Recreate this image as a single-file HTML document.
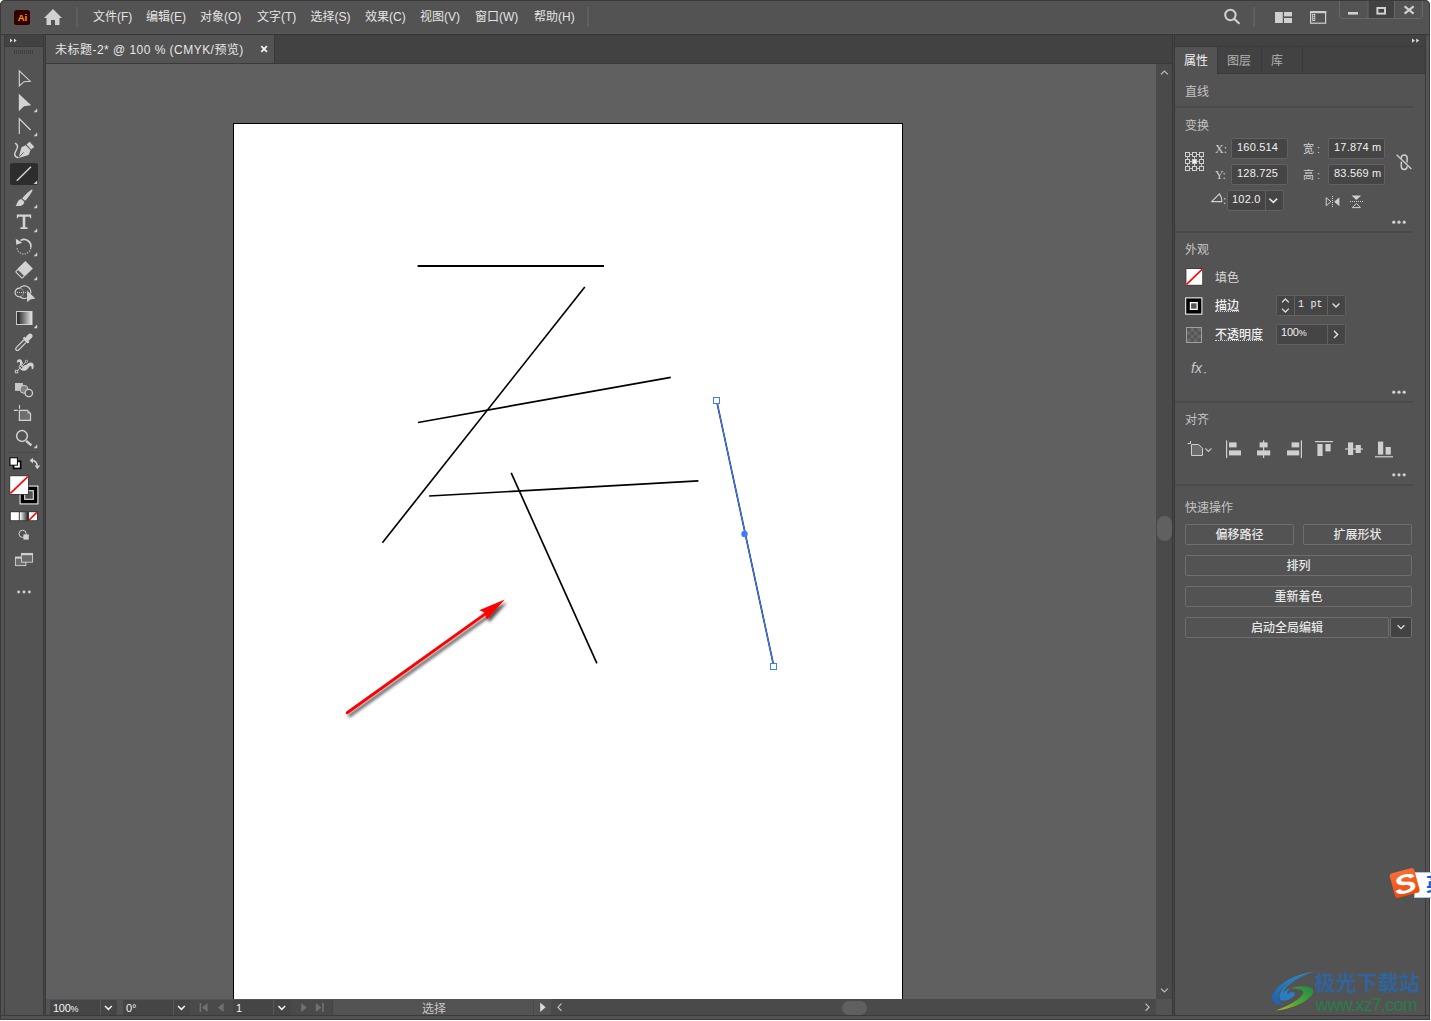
<!DOCTYPE html>
<html lang="zh-CN">
<head>
<meta charset="utf-8">
<title>未标题-2* @ 100 % (CMYK/预览)</title>
<style>
*{box-sizing:border-box;margin:0;padding:0}
html,body{width:1431px;height:1021px;overflow:hidden;background:#fff}
body{position:relative;font-family:"Liberation Sans","Noto Sans CJK SC",sans-serif;font-size:12px;color:#d6d6d6}
.abs{position:absolute}
#win{position:absolute;left:0;top:0;width:1430px;height:1020px;background:#535353;border-radius:5px 5px 0 0;overflow:hidden}
#frame{position:absolute;left:0;top:0;width:1430px;height:1020px;border:1px solid #3a3a3a;border-radius:5px 5px 0 0;pointer-events:none}
svg{position:absolute;left:0;top:0;overflow:visible}
/* menu bar */
#menubar{position:absolute;left:0;top:0;width:1431px;height:34px;background:#535353}
#menubar .mi{position:absolute;top:8px;height:18px;line-height:18px;font-size:12px;color:#e4e4e4;white-space:nowrap}
/* generic */
.dark{background:#424242}
.line{position:absolute;background:#3a3a3a}
.txt{position:absolute;white-space:nowrap;line-height:14px;height:14px}
/* toolbar */
#tools{position:absolute;left:4px;top:34px;width:42px;height:982px;background:#535353;border:1px solid #3b3b3b;border-right:3px solid #393939}
/* doc area */
#tabbar{position:absolute;left:46px;top:35px;width:1128px;height:29px;background:#424242;border-bottom:1px solid #3a3a3a}
#doctab{position:absolute;left:0;top:0;width:229px;height:28px;background:#535353;border-right:1px solid #3a3a3a}
#canvas{position:absolute;left:46px;top:64px;width:1110px;height:935px;background:#606060;overflow:hidden}
#artboard{position:absolute;left:187px;top:59px;width:670px;height:880px;background:#fff;border:1px solid #000}
#vscroll{position:absolute;left:1156px;top:64px;width:16px;height:935px;background:#4a4a4a}
#status{position:absolute;left:46px;top:999px;width:1126px;height:17px;background:#535353}
/* right panel */
#rpanel{position:absolute;left:1175px;top:35px;width:251px;height:981px;background:#535353;border-right:1px solid #3a3a3a;border-bottom:1px solid #3a3a3a}
.sep{position:absolute;left:0;width:238px;height:2px;background:#4a4a4a}
.inp{position:absolute;background:#454545;border:1px solid #616161;border-radius:2px;color:#f0f0f0;font-size:11px;letter-spacing:0.2px;line-height:14px;white-space:nowrap;overflow:hidden}
.btn{position:absolute;height:21px;border:1px solid #6e6e6e;border-radius:2px;text-align:center;line-height:20px;font-size:12px;font-weight:500;color:#e6e6e6;background:#535353}
.ser{font-family:"Liberation Serif","Noto Serif CJK SC",serif;font-size:12px}
.ul{border-bottom:1px dotted #cfcfcf;height:13px;line-height:12px}
.lbl{position:absolute;white-space:nowrap;font-size:12px;line-height:14px;color:#cfcfcf}
</style>
</head>
<body>
<div id="win">

<!-- MENU BAR -->
<div id="menubar">
  <div class="abs" style="left:14px;top:10px;width:16px;height:15px;background:#330000;border-radius:2.5px;color:#ff9a00;font-size:9.5px;font-weight:bold;line-height:15px;text-align:center;letter-spacing:0;padding-left:1px">Ai</div>
  <svg class="abs" style="left:43px;top:8px" width="20" height="18" viewBox="0 0 20 18"><path d="M10 1 L19 10 L16.5 10 L16.5 17 L12 17 L12 12 L8 12 L8 17 L3.5 17 L3.5 10 L1 10 Z" fill="#d0d0d0"/></svg>
  <div class="line" style="left:76px;top:7px;width:2px;height:20px;background:#5e5e5e"></div>
  <div class="mi" style="left:93px">文件(F)</div>
  <div class="mi" style="left:146px">编辑(E)</div>
  <div class="mi" style="left:200px">对象(O)</div>
  <div class="mi" style="left:257px">文字(T)</div>
  <div class="mi" style="left:310.5px">选择(S)</div>
  <div class="mi" style="left:365px">效果(C)</div>
  <div class="mi" style="left:420px">视图(V)</div>
  <div class="mi" style="left:475px">窗口(W)</div>
  <div class="mi" style="left:534px">帮助(H)</div>
  <div class="line" style="left:587px;top:7px;width:2px;height:20px;background:#5e5e5e"></div>
</div>
<div class="line" style="left:0;top:33px;width:1431px;height:1px;background:#575757"></div><div class="line" style="left:0;top:34px;width:1431px;height:1px;background:#363636"></div>

<!-- TOOLBAR -->
<div id="tools">
  <div class="abs dark" style="left:0;top:0;width:38px;height:12px;border-bottom:1px solid #3b3b3b"></div>
</div>


<!-- TOOL ICONS (page coordinates) -->
<svg id="toolicons" width="46" height="1021" viewBox="0 0 46 1021">
 <defs>
  <linearGradient id="gbw" x1="0" x2="1" y1="0" y2="0"><stop offset="0" stop-color="#1a1a1a"/><stop offset="1" stop-color="#e8e8e8"/></linearGradient>
  <linearGradient id="gwb" x1="0" x2="1" y1="0" y2="0"><stop offset="0" stop-color="#fff"/><stop offset="1" stop-color="#222"/></linearGradient>
 </defs>
 <g fill="#d2d2d2" stroke="none">
  <!-- header chevrons -->
  <path d="M10 38.5 L12.6 40.5 L10 42.5 Z M14 38.5 L16.6 40.5 L14 42.5 Z" fill="#d8d8d8"/>
  <!-- grip -->
  <g fill="#3e3e3e"><rect x="14" y="50" width="1" height="4"/><rect x="16" y="50" width="1" height="4"/><rect x="18" y="50" width="1" height="4"/><rect x="20" y="50" width="1" height="4"/><rect x="22" y="50" width="1" height="4"/><rect x="24" y="50" width="1" height="4"/><rect x="26" y="50" width="1" height="4"/><rect x="28" y="50" width="1" height="4"/><rect x="30" y="50" width="1" height="4"/><rect x="32" y="50" width="1" height="4"/></g>
  <!-- selection tool -->
  <path d="M19.3 70.8 L19.3 86 L24 81.7 L30.2 81.2 Z" fill="none" stroke="#d2d2d2" stroke-width="1.15" stroke-linejoin="miter"/>
  <!-- direct selection -->
  <path d="M18.8 93.8 L18.8 111.3 L24 106.3 L31.2 105.3 Z"/>
  <path d="M37.2 108.6 V112.2 H33.6 Z"/>
  <!-- anchor tool -->
  <path d="M19.3 134 L19.3 118.8 L30.6 130" fill="none" stroke="#d2d2d2" stroke-width="1.2"/>
  <path d="M37.2 132.6 V136.2 H33.6 Z"/>
  <!-- curvature pen -->
  <path d="M15.4 143.4 C17.2 144.4 18 145.6 17.4 147.6 C16.6 150.2 14.4 152.6 14.7 154.6 C14.9 156.4 16.2 157.2 17.8 157.5" fill="none" stroke="#d2d2d2" stroke-width="1.4" stroke-linecap="round"/>
  <path d="M18.5 157.9 L21.2 148 Q21.5 147.2 22.4 146.8 L25.8 145.3 L30.5 150 L29 154.2 Q28.6 155 27.8 155.3 Z"/>
  <path d="M26.6 144.6 L29.1 142.1 Q29.5 141.8 29.9 142.2 L33.8 146.3 Q34.1 146.8 33.7 147.2 L31.3 149.4 Z"/>
  <path d="M18.9 157.2 L23.6 152.4" stroke="#535353" stroke-width="0.9" fill="none"/>
  <!-- line tool (selected) -->
  <rect x="10" y="163" width="28" height="22" rx="2.5" fill="#2d2d2d"/>
  <path d="M16.8 180.8 L31 166.8" stroke="#d2d2d2" stroke-width="1.5" fill="none"/>
  <path d="M37.2 180.4 V184 H33.6 Z"/>
  <!-- brush -->
  <path d="M31.9 189.5 C30 190.2 25.2 194.8 22.1 198.4 L25.3 200.8 C28.4 197.2 31.6 192.6 32.4 190.4 C32.6 189.8 32.4 189.4 31.9 189.5 Z"/>
  <path d="M21.4 199 C19 199.4 18 201 17.4 202.6 C16.8 204.2 16.2 205.2 15.5 205.8 C19 206.3 22.2 206.4 23.7 203.8 C24.3 202.8 24.3 202 24 201.5 Z"/>
  <path d="M37.2 204.6 V208.2 H33.6 Z"/>
  <!-- type -->
  <path d="M16.8 214.4 H31.2 V218.2 H29.9 V216.8 H25.3 V227.2 H27.6 V228.9 H20.4 V227.2 H22.7 V216.8 H18.1 V218.2 H16.8 Z"/>
  <path d="M37.2 228.6 V232.2 H33.6 Z"/>
  <!-- rotate -->
  <path d="M20.6 240.4 A6.9 6.9 0 0 1 30.8 247.6" fill="none" stroke="#d2d2d2" stroke-width="1.7"/>
  <path d="M30.7 248.2 A6.9 6.9 0 0 1 17 247.6" fill="none" stroke="#d2d2d2" stroke-width="1.3" stroke-dasharray="1 1.55"/>
  <path d="M15.8 238.7 L16.2 244.7 L22.2 242.7 Z"/>
  <path d="M37.2 252.6 V256.2 H33.6 Z"/>
  <!-- eraser -->
  <g transform="translate(25.4 260.9) rotate(45)">
   <rect x="0" y="0" width="10.6" height="10.9"/>
   <rect x="0.7" y="11" width="9.2" height="3.6" rx="0.9" fill="none" stroke="#d2d2d2" stroke-width="1.2"/>
  </g>
  <path d="M37.2 276.6 V280.2 H33.6 Z"/>
  <!-- shape builder -->
  <path d="M19.63 288.21 A4.3 4.3 0 0 1 20.13 296.73" fill="none" stroke="#8c8c8c" stroke-width="1"/>
  <path d="M19.63 288.21 A4.3 4.3 0 1 0 20.13 296.73 A6.3 6.3 0 1 0 19.63 288.21 Z" fill="none" stroke="#d2d2d2" stroke-width="1.2"/>
  <path d="M17 292.5 H26.4" stroke="#e6e6e6" stroke-width="0.9" stroke-dasharray="0.9 1.15" fill="none"/>
  <path d="M27.1 290.6 L27.1 302.3 L30.2 299.5 L35.3 298.6 Z" stroke="#535353" stroke-width="0.9" paint-order="stroke"/>
  <!-- gradient -->
  <rect x="16.6" y="311.5" width="15.4" height="13" fill="url(#gbw)" stroke="#d2d2d2" stroke-width="1"/>
  <path d="M37.2 324.6 V328.2 H33.6 Z"/>
  <!-- eyedropper -->
  <g transform="translate(16.2 350) rotate(-45)">
   <rect x="0" y="-1.7" width="13.4" height="3.4" rx="1.7" fill="none" stroke="#d2d2d2" stroke-width="1.2"/>
   <rect x="12.8" y="-3.7" width="2.4" height="7.4" rx="0.6"/>
   <rect x="14.4" y="-2.5" width="7.8" height="5" rx="2.5"/>
  </g>
  <!-- symbol sprayer -->
  <path d="M16.9 362.4 C16.6 360.4 18 359.2 19.6 359.3 C21.4 359.4 22.2 361 22.6 362.6 C23 364.2 23.6 365.4 25 365.2 C26.8 365 28.2 362.8 30.4 362.6 C32.6 362.4 33.8 364 33.7 366 C33.6 367.4 33.4 368.4 33 369.2 L31.6 368.8 C31.8 367.6 31.6 366.2 30.6 366 C29.6 365.8 29 367.2 28 368.4 C26.8 369.8 25.2 371 23.2 370.8 C20.6 370.6 19.6 368.6 19.6 366.6 C19.6 364.8 20.4 363.4 19.8 362.2 C19.4 361.4 18.4 361.4 18.2 362.6 Z"/>
  <path d="M17.8 370.4 L25.6 362.2" stroke="#535353" stroke-width="2.2" fill="none"/>
  <path d="M17.6 370.6 L25.7 362.1" stroke="#d2d2d2" stroke-width="0.9" fill="none"/>
  <rect x="15.3" y="370.3" width="2.5" height="2.5" fill="#535353" stroke="#d2d2d2" stroke-width="0.9"/>
  <circle cx="26.4" cy="361.4" r="1.15" fill="#535353" stroke="#d2d2d2" stroke-width="0.8"/>
  <circle cx="21" cy="367" r="1.9" fill="#535353" stroke="#d2d2d2" stroke-width="0.9"/>
  <path d="M19.8 368.2 L22.2 365.8" stroke="#d2d2d2" stroke-width="0.8" fill="none"/>
  <!-- live paint / shapes -->
  <rect x="15.1" y="383.1" width="7.9" height="7.5" fill="#c8c8c8"/>
  <circle cx="24" cy="389.3" r="4" fill="#808080" stroke="#d2d2d2" stroke-width="0.9"/>
  <rect x="15.1" y="383.1" width="5.4" height="7.5" fill="#c8c8c8"/>
  <circle cx="28.8" cy="393" r="3.7" fill="#535353" stroke="#d2d2d2" stroke-width="1.3"/>
  <!-- artboard -->
  <path d="M19.5 404.9 V408.8 M13.9 410.4 H17.8" stroke="#d2d2d2" stroke-width="1.1" fill="none"/>
  <path d="M19.4 410.4 H27.4 L30.5 413.6 V420.4 H19.4 Z" fill="#6e6e6e" stroke="#d2d2d2" stroke-width="1.2"/>
  <path d="M27.4 410.4 V413.6 H30.5 Z" fill="#bdbdbd"/>
  <!-- zoom -->
  <circle cx="22" cy="436" r="5.4" fill="none" stroke="#d2d2d2" stroke-width="1.5"/>
  <path d="M26.2 440.8 L31.4 445.4" stroke="#d2d2d2" stroke-width="2.4" fill="none"/>
  <path d="M37.2 444.6 V448.2 H33.6 Z"/>
  <!-- separator -->
  <rect x="9" y="452" width="30" height="1" fill="#484848"/>
  <!-- default fill/stroke -->
  <rect x="13.6" y="461.4" width="7" height="7" fill="#fff" stroke="#000" stroke-width="1.6"/>
  <rect x="10" y="457.8" width="7.4" height="7.4" fill="#fff" stroke="#000" stroke-width="1"/>
  <!-- swap -->
  <path d="M31 460.4 C34.6 460 37 462.4 37.2 466" fill="none" stroke="#d2d2d2" stroke-width="1.6"/>
  <path d="M29.6 460.6 L33 457.8 L33 463.4 Z"/>
  <path d="M34.6 465.4 L40.2 465.4 L37.4 469.2 Z"/>
  <!-- stroke swatch -->
  <rect x="19.6" y="485.6" width="18.8" height="18.8" fill="#fff"/>
  <rect x="20.6" y="486.6" width="16.8" height="16.8" fill="#000"/>
  <rect x="24.2" y="490.2" width="9.6" height="9.6" fill="#fff"/>
  <rect x="25.2" y="491.2" width="7.6" height="7.6" fill="#535353"/>
  <!-- fill swatch -->
  <rect x="9.4" y="475.4" width="19.4" height="19.4" fill="#3a3a3a"/>
  <rect x="10.2" y="476.2" width="17.8" height="17.8" fill="#fff"/>
  <path d="M10.4 493.4 L27.8 476.6" stroke="#f00" stroke-width="1.6"/>
  <!-- colour/gradient/none -->
  <rect x="9.8" y="511.2" width="28" height="10" fill="#3a3a3a"/>
  <rect x="10.8" y="512.2" width="8" height="8" fill="#fff"/>
  <rect x="19.8" y="512.2" width="8.4" height="8" fill="url(#gwb)"/>
  <rect x="29" y="512.2" width="8" height="8" fill="#fff"/>
  <path d="M29.2 520 L36.8 512.4" stroke="#f00" stroke-width="1.6"/>
  <!-- draw mode -->
  <circle cx="22.6" cy="533.8" r="3.6" fill="none" stroke="#d2d2d2" stroke-width="1"/>
  <rect x="23.4" y="534.4" width="5.4" height="5.2" fill="#d2d2d2"/>
  <!-- screen mode -->
  <rect x="15.4" y="557" width="10.4" height="8.6" fill="#6a6a6a" stroke="#d2d2d2" stroke-width="0.9"/>
  <rect x="15.4" y="557" width="10.4" height="1.6" fill="#d2d2d2"/>
  <rect x="21.4" y="553.4" width="11.2" height="8.8" fill="#6a6a6a" stroke="#d2d2d2" stroke-width="0.9"/>
  <rect x="21.4" y="553.4" width="11.2" height="1.8" fill="#d2d2d2"/>
  <!-- more -->
  <circle cx="18.6" cy="592" r="1.4"/><circle cx="24" cy="592" r="1.4"/><circle cx="29.4" cy="592" r="1.4"/>
 </g>
</svg>

<div class="line" style="left:44px;top:35px;width:1px;height:981px;background:#464646"></div>
<!-- DOC TAB BAR -->
<div id="tabbar">
  <div id="doctab">
    <div class="txt" style="left:9px;top:8px;font-size:12px;letter-spacing:0.47px;color:#e6e6e6">未标题-2* @ 100 % (CMYK/预览)</div>
    
  </div>
</div>

<!-- CANVAS -->
<div id="canvas">
  <div id="artboard"></div>
</div>
<div id="vscroll"></div>

<!-- ARTWORK (page coordinates) -->
<svg id="art" width="1160" height="1000" viewBox="0 0 1160 1000">
 <defs>
  <filter id="sh" x="-10%" y="-20%" width="130%" height="150%"><feDropShadow dx="2.4" dy="2.9" stdDeviation="1.8" flood-color="#000" flood-opacity="0.68"/></filter>
 </defs>
 <g stroke="#000" stroke-width="1.65" fill="none" stroke-linecap="butt">
  <path d="M417.6 266 H604" stroke-width="2"/>
  <path d="M584.8 287 L382.4 542.7"/>
  <path d="M418 422.5 L670.8 377.4"/>
  <path d="M429.1 496 L698.4 480.9"/>
  <path d="M511.2 472.9 L596.9 663.4"/>
 </g>
 <!-- selected line -->
 <path d="M716.6 400.6 L773.8 666.4" stroke="#101840" stroke-width="1.6" fill="none"/>
 <path d="M716.6 400.6 L773.8 666.4" stroke="#3f7bff" stroke-width="1.1" fill="none"/>
 <rect x="713.5" y="397.5" width="6" height="6" fill="#fff" stroke="#3f7bff" stroke-width="1"/>
 <rect x="770.5" y="663.5" width="6" height="6" fill="#fff" stroke="#3f7bff" stroke-width="1"/>
 <circle cx="744.5" cy="533.9" r="3.2" fill="#3f7bff"/>
 <!-- red arrow -->
 <g filter="url(#sh)">
  <path d="M347.2 712.8 L486 613.4" stroke="#ff0000" stroke-width="2.9" fill="none" stroke-linecap="round"/>
  <path d="M504.8 599.4 L479.2 610.2 L484.4 612.2 L485.8 615.4 L486.6 619.8 Z" fill="#ff0000"/>
 </g>
</svg>

<div class="line" style="left:1172px;top:35px;width:3px;height:981px;background:#383838"></div><div class="line" style="left:1173px;top:35px;width:1px;height:981px;background:#464646"></div>

<!-- STATUS BAR -->
<div id="status">
  <div class="abs" style="left:4px;top:1px;width:67px;height:16px;background:#454545"></div>
  <div class="abs" style="left:54px;top:1px;width:1px;height:16px;background:#575757"></div>
  <div class="txt" style="left:7px;top:2px;font-size:11px;letter-spacing:-0.3px;color:#f4f4f4">100<span style="font-size:9px;letter-spacing:-0.5px">%</span></div>
  <div class="abs" style="left:77px;top:1px;width:67px;height:16px;background:#454545"></div>
  <div class="abs" style="left:127px;top:1px;width:1px;height:16px;background:#575757"></div>
  <div class="txt" style="left:80px;top:2px;font-size:11px;color:#f4f4f4">0°</div>
  <div class="abs" style="left:144px;top:1px;width:142px;height:16px;background:#4a4a4a"></div>
  <div class="abs" style="left:187px;top:1px;width:58px;height:16px;background:#454545"></div>
  <div class="abs" style="left:227px;top:1px;width:1px;height:16px;background:#575757"></div>
  <div class="txt" style="left:190px;top:2px;font-size:11px;color:#f4f4f4">1</div>
  <div class="abs" style="left:286px;top:1px;width:1px;height:16px;background:#444"></div>
  <div class="txt" style="left:376px;top:3px;font-size:12px;color:#c6c6c6">选择</div>
  <div class="abs" style="left:487px;top:1px;width:1px;height:16px;background:#484848"></div>
  <div class="abs" style="left:505px;top:0px;width:605px;height:17px;background:#4a4a4a"></div>
  <div class="abs" style="left:796px;top:2px;width:25px;height:14px;border-radius:7px;background:#606060"></div>
</div>
<div class="abs" style="left:1157px;top:516px;width:15px;height:25px;border-radius:7.5px;background:#606060"></div>
<svg id="sbicons" width="1431" height="1021" viewBox="0 0 1431 1021">
  <g fill="none" stroke="#f0f0f0" stroke-width="1.5">
   <path d="M105 1006 L108.4 1009.4 L111.8 1006"/>
   <path d="M178 1006 L181.4 1009.4 L184.8 1006"/>
   <path d="M278.4 1006 L281.8 1009.4 L285.2 1006"/>
  </g>
  <g fill="#707070">
   <rect x="199.6" y="1003" width="1.6" height="9"/><path d="M207.6 1003 V1012 L202 1007.5 Z"/>
   <path d="M223.6 1003 V1012 L218 1007.5 Z"/>
   <path d="M301.2 1003 V1012 L306.8 1007.5 Z"/>
   <path d="M315.8 1003 V1012 L321.4 1007.5 Z"/><rect x="322.2" y="1003" width="1.6" height="9"/>
  </g>
  <path d="M540.2 1002.6 V1012 L545.6 1007.3 Z" fill="#dcdcdc"/>
  <path d="M561.4 1003.6 L558 1007.2 L561.4 1010.8" fill="none" stroke="#c4c4c4" stroke-width="1.2"/>
  <path d="M1145.6 1003.6 L1149 1007.2 L1145.6 1010.8" fill="none" stroke="#c4c4c4" stroke-width="1.2"/>
</svg>

<!-- RIGHT PANEL -->
<div id="rpanel">
  <div class="abs dark" style="left:0;top:0;width:250px;height:12px;border-bottom:1px solid #3a3a3a"></div>
  <div class="abs dark" style="left:0;top:12px;width:250px;height:27px;border-bottom:1px solid #3a3a3a"></div>
  <div class="abs" style="left:0;top:12px;width:43px;height:27px;background:#535353;border-right:1px solid #3a3a3a"></div>
  <div class="line" style="left:86px;top:12px;width:1px;height:26px"></div>
  <div class="line" style="left:127px;top:12px;width:1px;height:26px"></div>
  <div class="txt" style="left:9px;top:19px;color:#f4f4f4">属性</div>
  <div class="txt" style="left:52px;top:19px;color:#b2b2b2">图层</div>
  <div class="txt" style="left:96px;top:19px;color:#b2b2b2">库</div>

  <div class="lbl" style="left:10px;top:50px;color:#c4c4c4">直线</div>
  <div class="sep" style="top:71px"></div>
  <div class="lbl" style="left:10px;top:84px;color:#c4c4c4">变换</div>

  <div class="lbl ser" style="left:40px;top:107px">X:</div>
  <div class="inp" style="left:56px;top:103px;width:57px;height:21px;padding:0.5px 0 0 5px">160.514</div>
  <div class="lbl ser" style="left:40px;top:133px">Y:</div>
  <div class="inp" style="left:56px;top:129px;width:57px;height:21px;padding:0.5px 0 0 5px">128.725</div>
  <div class="lbl" style="left:128px;top:107px;font-size:11px">宽 :</div>
  <div class="inp" style="left:153px;top:103px;width:57px;height:21px;padding:0.5px 0 0 5px">17.874 m</div>
  <div class="lbl" style="left:128px;top:133px;font-size:11px">高 :</div>
  <div class="inp" style="left:153px;top:129px;width:57px;height:21px;padding:0.5px 0 0 5px">83.569 m</div>
  <div class="lbl ser" style="left:48px;top:158px">:</div>
  <div class="inp" style="left:52px;top:155px;width:57px;height:21px;padding:1px 0 0 4px">102.0</div>
  <div class="line" style="left:90px;top:156px;width:1px;height:19px;background:#616161"></div>
  <div class="sep" style="top:196px"></div>

  <div class="lbl" style="left:10px;top:208px;color:#c4c4c4">外观</div>
  <div class="lbl" style="left:40px;top:236px;color:#d8d8d8">填色</div>
  <div class="lbl ul" style="left:40px;top:264px;color:#f0f0f0;font-weight:500">描边</div>
  <div class="inp" style="left:101px;top:260px;width:70px;height:21px;padding:2px 0 0 21px;font-family:'Liberation Mono',monospace;font-size:10px">1 pt</div>
  <div class="line" style="left:119px;top:261px;width:1px;height:19px;background:#616161"></div>
  <div class="line" style="left:152px;top:261px;width:1px;height:19px;background:#616161"></div>
  <div class="lbl ul" style="left:40px;top:293px;color:#f0f0f0;font-weight:500">不透明度</div>
  <div class="inp" style="left:101px;top:289px;width:70px;height:21px;padding:0 0 0 4px;letter-spacing:-0.2px">100<span style="font-size:9px">%</span></div>
  <div class="line" style="left:152px;top:290px;width:1px;height:19px;background:#616161"></div>
  <div class="sep" style="top:366px"></div>

  <div class="lbl" style="left:10px;top:378px;color:#c4c4c4">对齐</div>
  <div class="sep" style="top:449px"></div>

  <div class="lbl" style="left:10px;top:466px;color:#c4c4c4">快速操作</div>
  <div class="btn" style="left:10px;top:489px;width:109px">偏移路径</div>
  <div class="btn" style="left:128px;top:489px;width:109px">扩展形状</div>
  <div class="btn" style="left:10px;top:520px;width:227px">排列</div>
  <div class="btn" style="left:10px;top:551px;width:227px">重新着色</div>
  <div class="btn" style="left:10px;top:582px;width:204px">启动全局编辑</div>
  <div class="btn" style="left:215px;top:582px;width:22px;background:#424242"></div>
</div>


<!-- RIGHT PANEL + TOP RIGHT ICONS (page coordinates) -->
<svg id="picons" width="1431" height="1021" viewBox="0 0 1431 1021">
 <g fill="#d0d0d0">
  <!-- search -->
  <circle cx="1230.4" cy="15" r="5.2" fill="none" stroke="#d0d0d0" stroke-width="2"/>
  <path d="M1234.2 18.8 L1239.4 23.8" stroke="#d0d0d0" stroke-width="2.1" fill="none"/>
  <rect x="1253" y="7" width="2" height="20" fill="#5e5e5e"/>
  <!-- arrange docs -->
  <rect x="1275" y="12" width="7.8" height="11"/><rect x="1284" y="12" width="8" height="4.4"/><rect x="1284" y="18" width="8" height="5"/>
  <!-- workspace -->
  <rect x="1310.6" y="11.6" width="15" height="11.6" fill="none" stroke="#d0d0d0" stroke-width="1.2"/>
  <rect x="1310" y="11" width="16.2" height="2.2"/>
  <rect x="1312.2" y="14" width="3" height="7"/><g fill="#535353"><rect x="1313.1" y="15" width="1.2" height="1.2"/><rect x="1313.1" y="16.9" width="1.2" height="1.2"/><rect x="1313.1" y="18.8" width="1.2" height="1.2"/></g>
  <!-- window controls -->
  <path d="M1339.5 0 V15.5 Q1339.5 18.5 1342.5 18.5 H1419.5 Q1422.5 18.5 1422.5 15.5 V0" fill="none" stroke="#686868" stroke-width="1"/>
  <rect x="1368" y="1" width="26" height="17" fill="#424242"/>
  <rect x="1367.5" y="0" width="1" height="18" fill="#686868"/><rect x="1394" y="0" width="1" height="18" fill="#686868"/>
  <rect x="1348" y="12" width="10" height="2.6"/>
  <rect x="1377.4" y="8" width="7.6" height="5.6" fill="none" stroke="#d0d0d0" stroke-width="2"/>
  <path d="M1404.6 6.4 L1413.6 13.6 M1413.6 6.4 L1404.6 13.6" stroke="#d0d0d0" stroke-width="2.2" fill="none"/>
  <path d="M261.3 46.2 L266.9 51.8 M266.9 46.2 L261.3 51.8" stroke="#efefef" stroke-width="1.9" fill="none"/>
  <!-- panel collapse chevrons -->
  <path d="M1412 38.5 L1415 40.6 L1412 42.8 Z M1416.2 38.5 L1419.2 40.6 L1416.2 42.8 Z" fill="#d8d8d8"/>
  <!-- vscroll arrows -->
  <path d="M1161 74.4 L1164.4 71 L1167.8 74.4" fill="none" stroke="#bdbdbd" stroke-width="1.2"/>
  <path d="M1161 988.6 L1164.4 992 L1167.8 988.6" fill="none" stroke="#bdbdbd" stroke-width="1.2"/>

  <!-- reference point -->
  <g fill="none" stroke="#cfcfcf" stroke-width="1">
   <path d="M1187.5 154.5 H1201.5 V168.5 H1187.5 Z M1194.5 154.5 V168.5 M1187.5 161.5 H1201.5" stroke="#c4c4c4"/>
   <g fill="#535353">
   <rect x="1185.5" y="152.5" width="4" height="4"/><rect x="1192.5" y="152.5" width="4" height="4"/><rect x="1199.5" y="152.5" width="4" height="4"/>
   <rect x="1185.5" y="159.5" width="4" height="4"/><rect x="1192.5" y="159.5" width="4" height="4" fill="#f0f0f0"/><rect x="1199.5" y="159.5" width="4" height="4"/>
   <rect x="1185.5" y="166.5" width="4" height="4"/><rect x="1192.5" y="166.5" width="4" height="4"/><rect x="1199.5" y="166.5" width="4" height="4"/>
   </g>
  </g>
  <!-- link (broken) -->
  <g fill="none" stroke="#cfcfcf" stroke-width="1.5">
   <path d="M1401.3 158.6 V157.8 A2.9 2.9 0 0 1 1407.1 157.8 V162.4"/>
   <path d="M1401.3 161.8 V166.6 A2.9 2.9 0 0 0 1407.1 166.6 V166.2"/>
   <path d="M1396.6 154.8 L1411.4 169" stroke-width="1.4"/>
  </g>
  <!-- angle -->
  <path d="M1211.6 201.7 L1219.4 193.8 Q1222.2 197.4 1221.9 201.7 Z" fill="none" stroke="#cfcfcf" stroke-width="1.2" stroke-linejoin="round"/>
  <path d="M1269.4 198.6 L1273.3 202.4 L1277.2 198.6" fill="none" stroke="#e6e6e6" stroke-width="1.5"/>
  <!-- flip h -->
  <path d="M1326.2 197.6 V205.8 L1330.8 201.7 Z" fill="none" stroke="#cfcfcf" stroke-width="1"/>
  <path d="M1339.4 197.2 V206.2 L1334.2 201.7 Z"/>
  <path d="M1332.5 196 V208" stroke="#cfcfcf" stroke-width="1" stroke-dasharray="1 1" fill="none"/>
  <!-- flip v -->
  <path d="M1351.6 195.4 H1361.2 L1356.4 200 Z"/>
  <path d="M1352.4 207.6 H1360.4 L1356.4 203.4 Z" fill="none" stroke="#cfcfcf" stroke-width="1"/>
  <path d="M1350 201.5 H1363" stroke="#cfcfcf" stroke-width="1" stroke-dasharray="1 1" fill="none"/>
  <!-- more dots -->
  <circle cx="1393.8" cy="222.2" r="1.6"/><circle cx="1399" cy="222.2" r="1.6"/><circle cx="1404.2" cy="222.2" r="1.6"/>
  <circle cx="1393.8" cy="392.2" r="1.6"/><circle cx="1399" cy="392.2" r="1.6"/><circle cx="1404.2" cy="392.2" r="1.6"/>
  <circle cx="1393.8" cy="474.8" r="1.6"/><circle cx="1399" cy="474.8" r="1.6"/><circle cx="1404.2" cy="474.8" r="1.6"/>

  <!-- fill swatch -->
  <rect x="1185.6" y="268.2" width="17.4" height="17.4" fill="#3c3c3c"/>
  <rect x="1186.4" y="269" width="15.8" height="15.8" fill="#fff"/>
  <path d="M1186.6 284.4 L1202 269.4" stroke="#f00" stroke-width="1.5"/>
  <!-- stroke swatch -->
  <rect x="1185.2" y="297.4" width="17.2" height="17.2" fill="#fff"/>
  <rect x="1186.2" y="298.4" width="15.2" height="15.2" fill="#000"/>
  <rect x="1189.8" y="302" width="8" height="8" fill="#fff"/>
  <rect x="1191.1" y="303.3" width="5.4" height="5.4" fill="#555"/>
  <!-- opacity swatch -->
  <rect x="1186.5" y="327.5" width="15" height="15" fill="#686868" stroke="#a0a0a0" stroke-width="1"/>
  <g fill="#555"><rect x="1187" y="328" width="3.5" height="3.5"/><rect x="1194" y="328" width="3.5" height="3.5"/><rect x="1190.5" y="331.5" width="3.5" height="3.5"/><rect x="1197.5" y="331.5" width="3.5" height="3.5"/><rect x="1187" y="335" width="3.5" height="3.5"/><rect x="1194" y="335" width="3.5" height="3.5"/><rect x="1190.5" y="338.5" width="3.5" height="3.5"/><rect x="1197.5" y="338.5" width="3.5" height="3.5"/></g>
  <!-- stroke stepper arrows -->
  <path d="M1282 302.4 L1285.4 299 L1288.8 302.4" fill="none" stroke="#e0e0e0" stroke-width="1.3"/>
  <path d="M1282 308.6 L1285.4 312 L1288.8 308.6" fill="none" stroke="#e0e0e0" stroke-width="1.3"/>
  <path d="M1332.6 303.6 L1336 307 L1339.4 303.6" fill="none" stroke="#e0e0e0" stroke-width="1.4"/>
  <path d="M1334 330.8 L1337.6 334.4 L1334 338" fill="none" stroke="#e0e0e0" stroke-width="1.4"/>
  <!-- fx dropdown dot -->
  <path d="M1203.6 372.2 H1206.4 L1205 373.8 Z" fill="#bdbdbd"/>

  <!-- align icons -->
  <g fill="#cfcfcf">
   <!-- artboard align -->
   <path d="M1190.5 441 V444 M1187.6 443.5 H1191" stroke="#cfcfcf" stroke-width="1" fill="none"/>
   <path d="M1191.5 444.5 H1198.6 L1202.5 448.2 V455.5 H1191.5 Z" fill="#6c6c6c" stroke="#cfcfcf" stroke-width="1"/>
   <path d="M1205.4 448.4 L1208.4 451.4 L1211.4 448.4" fill="none" stroke="#cfcfcf" stroke-width="1.1"/>
   <!-- left -->
   <rect x="1226" y="440.4" width="1.2" height="17.6"/><rect x="1229" y="442.4" width="7.6" height="5"/><rect x="1229" y="450.4" width="12" height="5"/>
   <!-- h center -->
   <rect x="1263" y="440.4" width="1.2" height="17.6"/><rect x="1259.6" y="442.4" width="8" height="5"/><rect x="1257" y="450.4" width="13.2" height="5"/>
   <!-- right -->
   <rect x="1300.8" y="440.4" width="1.2" height="17.6"/><rect x="1291.6" y="442.4" width="7.6" height="5"/><rect x="1287" y="450.4" width="12.2" height="5"/>
   <!-- top -->
   <rect x="1315" y="441" width="18" height="1.2"/><rect x="1317.4" y="444" width="5.2" height="12"/><rect x="1325.4" y="444" width="5.2" height="7.4"/>
   <!-- v center -->
   <rect x="1345" y="448.4" width="18" height="1.2"/><rect x="1348" y="442.4" width="5.2" height="12.6"/><rect x="1355.6" y="445" width="5.2" height="8"/>
   <!-- bottom -->
   <rect x="1375" y="456.2" width="18" height="1.2"/><rect x="1378" y="441.6" width="5.2" height="13"/><rect x="1385.6" y="447" width="5.2" height="7.6"/>
  </g>
  <!-- global edit dropdown -->
  <path d="M1397.6 625.2 L1401 628.6 L1404.4 625.2" fill="none" stroke="#e0e0e0" stroke-width="1.3"/>
 </g>
 <text x="1191" y="373" font-family="Liberation Sans, sans-serif" font-style="italic" font-size="14" fill="#c8c8c8">fx</text>
</svg>

<div class="line" style="left:0;top:1015px;width:1431px;height:1px"></div>

<div id="frame"></div>
</div>
<!-- OVERLAYS: IME badge + watermark -->
<div class="abs" style="left:1414px;top:872px;width:18px;height:26px;background:#fff;border:1px solid #a9c6ec;border-right:none;overflow:hidden">
  <div class="txt" style="left:11px;top:2px;font-size:18px;line-height:20px;height:20px;font-weight:bold;color:#0a5fd8">英</div>
</div>
<svg id="ov" width="1431" height="1021" viewBox="0 0 1431 1021">
 <defs>
  <linearGradient id="og" x1="0" y1="0" x2="0" y2="1"><stop offset="0" stop-color="#fb6c35"/><stop offset="1" stop-color="#f04a0c"/></linearGradient>
  <linearGradient id="sw1" x1="1" y1="0" x2="0" y2="1"><stop offset="0" stop-color="#2a9ad0"/><stop offset="1" stop-color="#1f5fb0"/></linearGradient>
  <linearGradient id="sw2" x1="1" y1="0" x2="0" y2="1"><stop offset="0" stop-color="#1e8a4a"/><stop offset="0.6" stop-color="#58a832"/><stop offset="1" stop-color="#c8b820"/></linearGradient>
 </defs>
 <g transform="rotate(-15 1404.6 883)">
  <rect x="1392" y="870.4" width="25.4" height="25.4" rx="3" fill="url(#og)"/>
  <text x="1404.7" y="893" text-anchor="middle" font-family="Liberation Sans, sans-serif" font-weight="bold" font-style="italic" font-size="26" fill="#fff" transform="translate(1404.7 0) scale(1.3 1) translate(-1404.7 0)">S</text>
 </g>
 <!-- swirl -->
 <path d="M1316 971.4 C1296 973.6 1277 983 1272.4 996 C1270.8 1002 1276 1005.6 1284 1004.4 C1276.6 1001 1276.6 994.6 1282 988.4 C1289.6 980 1302 974.6 1316 971.4 Z" fill="url(#sw1)"/>
 <path d="M1308 974 C1294 977 1282 986 1279.6 995 C1278.6 1000.4 1282.6 1002 1288 1000 C1293.6 997.8 1296.4 994.4 1294 992.6 C1292.4 991.4 1289 992.4 1288.4 994.2 C1286.4 994 1287 990 1291.6 988 C1284 989.4 1281 994 1283.6 997 C1280.6 993 1286 983 1308 974 Z" fill="#2a7cc4"/>
 <path d="M1290.4 988.6 C1298 985.4 1311.6 985.4 1313.2 990 C1314.4 997 1300 1007.6 1276 1010.6 C1290 1005.4 1302 998 1303.4 992.6 C1303.8 989.6 1297 987.8 1290.4 988.6 Z" fill="url(#sw2)"/>
</svg>
<div class="txt" style="left:1314px;top:970px;font-size:21px;line-height:25px;height:25px;font-weight:bold;color:#2b66a6;opacity:0.92;letter-spacing:0.1px">极光下载站</div>
<div class="txt" style="left:1315px;top:992.5px;font-size:18px;line-height:24px;height:24px;color:#24844a;opacity:0.92;letter-spacing:-0.75px">www.xz7.com</div>
</body>
</html>
